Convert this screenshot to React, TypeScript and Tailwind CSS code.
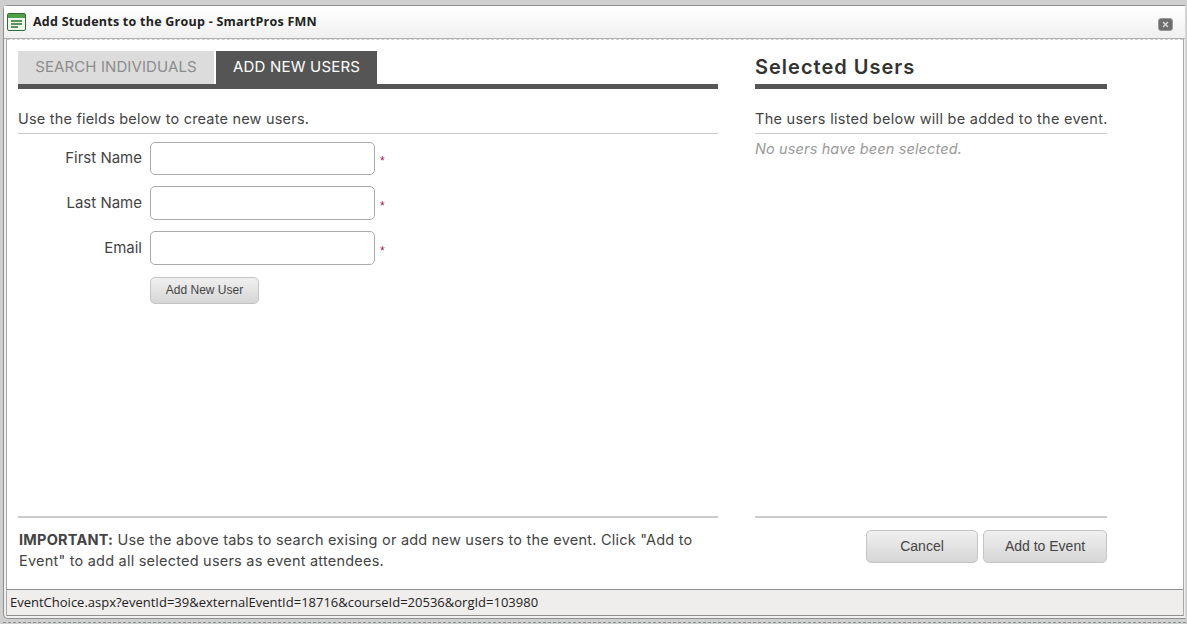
export default function App() {
  const gotham = "font-['Inter','Liberation_Sans',sans-serif]";
  const field = (label: string, inputClass: string) => (
    <div className="flex items-center h-[34px] mb-[11px]">
      <label className={`w-[124px] text-right text-[15px] text-[#444] ${gotham}`}>{label}</label>
      <input className={`ml-2 w-[225px] bg-white border border-[#aaa] rounded-[5px] ${inputClass}`} />
      <span className="ml-[5px] mt-[6px] text-[12px] text-[#b0125b] font-['Liberation_Sans',sans-serif]">*</span>
    </div>
  );
  const btn =
    "border border-[#c4c4c4] bg-gradient-to-b from-[#f0f0f0] to-[#d6d6d6] text-[#444] font-['Liberation_Sans',sans-serif] rounded-[5px]";
  return (
    <div className="w-[1187px] h-[624px] bg-[#cfcfcf] overflow-hidden flex flex-col pt-[5px] pl-[3px] pr-[1px]">
      <div className="h-[614px] shrink-0 flex flex-col border-t border-l border-r border-b border-[#8f8f8f] border-r-[#d8d8d8] rounded-tl-[5px] rounded-bl-[5px] bg-[#f0f0f0]">
        <div className="h-[33px] shrink-0 flex items-center bg-gradient-to-b from-white to-[#f0f0f0] border-b border-[#b0b0b0]">
          <svg width="19" height="18" viewBox="0 0 19 18" className="shrink-0 ml-[3px]">
            <rect x="0.5" y="0.5" width="18" height="17" rx="1.5" fill="#eef6ea" stroke="#2f6b35" />
            <rect x="1" y="1" width="17" height="4" fill="#4fa04a" />
            <path d="M4 8h11M4 11h11M4 14h7" stroke="#2f6b35" strokeWidth="1.3" />
          </svg>
          <div className="ml-[7px] text-[12.5px] font-bold text-[#222] font-['Open_Sans',sans-serif] tracking-[0.02em]">
            Add Students to the Group - SmartPros FMN
          </div>
          <div className="ml-auto mr-[12px] mt-[5px] w-[15px] h-[13px] rounded-[3px] bg-[#6d6d6d] border border-[#999] flex items-center justify-center">
            <svg width="7" height="7" viewBox="0 0 7 7">
              <path d="M1 1l5 5M6 1L1 6" stroke="#ddd" strokeWidth="1.4" />
            </svg>
          </div>
        </div>
        <div className="flex-1 min-h-0 flex flex-col ml-[2px] mr-[1px] border-l border-r border-[#a8a8a8]">
          <div className="flex-1 min-h-0 bg-white border-t border-dashed border-t-[#cfcfcf] flex px-[11px] pt-[11px]">
            <div className="w-[700px] flex flex-col">
              <div className="flex h-[33px] gap-[2px]">
                <div className={`w-[196px] bg-[#dcdcdc] text-[#8c8c8c] text-[15px] tracking-[0.1px] flex items-center justify-center ${gotham}`}>
                  SEARCH INDIVIDUALS
                </div>
                <div className={`w-[161px] bg-[#555] text-white text-[15px] tracking-[0.2px] flex items-center justify-center ${gotham}`}>
                  ADD NEW USERS
                </div>
              </div>
              <div className="h-[5px] bg-[#555]" />
              <div className={`h-[45px] flex items-end pb-[3px] border-b border-[#ccc] text-[#444] text-[14.5px] tracking-[0.2px] ${gotham}`}>
                Use the fields below to create new users.
              </div>
              <div className="pt-[7px]">
                {field("First Name", "h-[33px]")}
                {field("Last Name", "h-[34px]")}
                {field("Email", "h-[34px]")}
                <button className={`ml-[132px] w-[109px] h-[27px] text-[12px] ${btn}`}>Add New User</button>
              </div>
              <div className={`mt-auto mb-[18px] border-t-2 border-[#ccc] pt-[11px] pl-[1px] text-[14.5px] tracking-[0.22px] leading-[21px] text-[#444] ${gotham}`}>
                <b>IMPORTANT:</b> Use the above tabs to search exising or add new users to the event. Click "Add to
                Event" to add all selected users as event attendees.
              </div>
            </div>
            <div className="w-[352px] ml-[37px] flex flex-col">
              <div className={`h-[33px] pb-[2px] flex items-center text-[20px] font-semibold tracking-[1px] text-[#333] ${gotham}`}>Selected Users</div>
              <div className="h-[5px] bg-[#555]" />
              <div className={`h-[45px] flex items-end pb-[3px] border-b border-[#ccc] text-[#444] text-[14.5px] tracking-[0.28px] whitespace-nowrap ${gotham}`}>
                The users listed below will be added to the event.
              </div>
              <div className={`mt-[4px] italic text-[14.5px] tracking-[0.13px] text-[#999] ${gotham}`}>No users have been selected.</div>
              <div className="mt-auto mb-[26px] border-t-2 border-[#ccc] pt-[12px] flex justify-end gap-[5px]">
                <button className={`w-[112px] h-[33px] text-[14px] ${btn}`}>Cancel</button>
                <button className={`w-[124px] h-[33px] text-[14px] ${btn}`}>Add to Event</button>
              </div>
            </div>
          </div>
          <div className="h-[27px] shrink-0 bg-[#f0eded] border-t border-b border-[#8f8f8f] flex items-center px-[3px] text-[13px] text-[#222] font-['Open_Sans',sans-serif]">
            EventChoice.aspx?eventId=39&amp;externalEventId=18716&amp;courseId=20536&amp;orgId=103980
          </div>
        </div>
        <div className="h-[2px] shrink-0" />
      </div>
      <div className="mt-[3px] border-t border-dashed border-[#8a968a]" />
    </div>
  );
}
